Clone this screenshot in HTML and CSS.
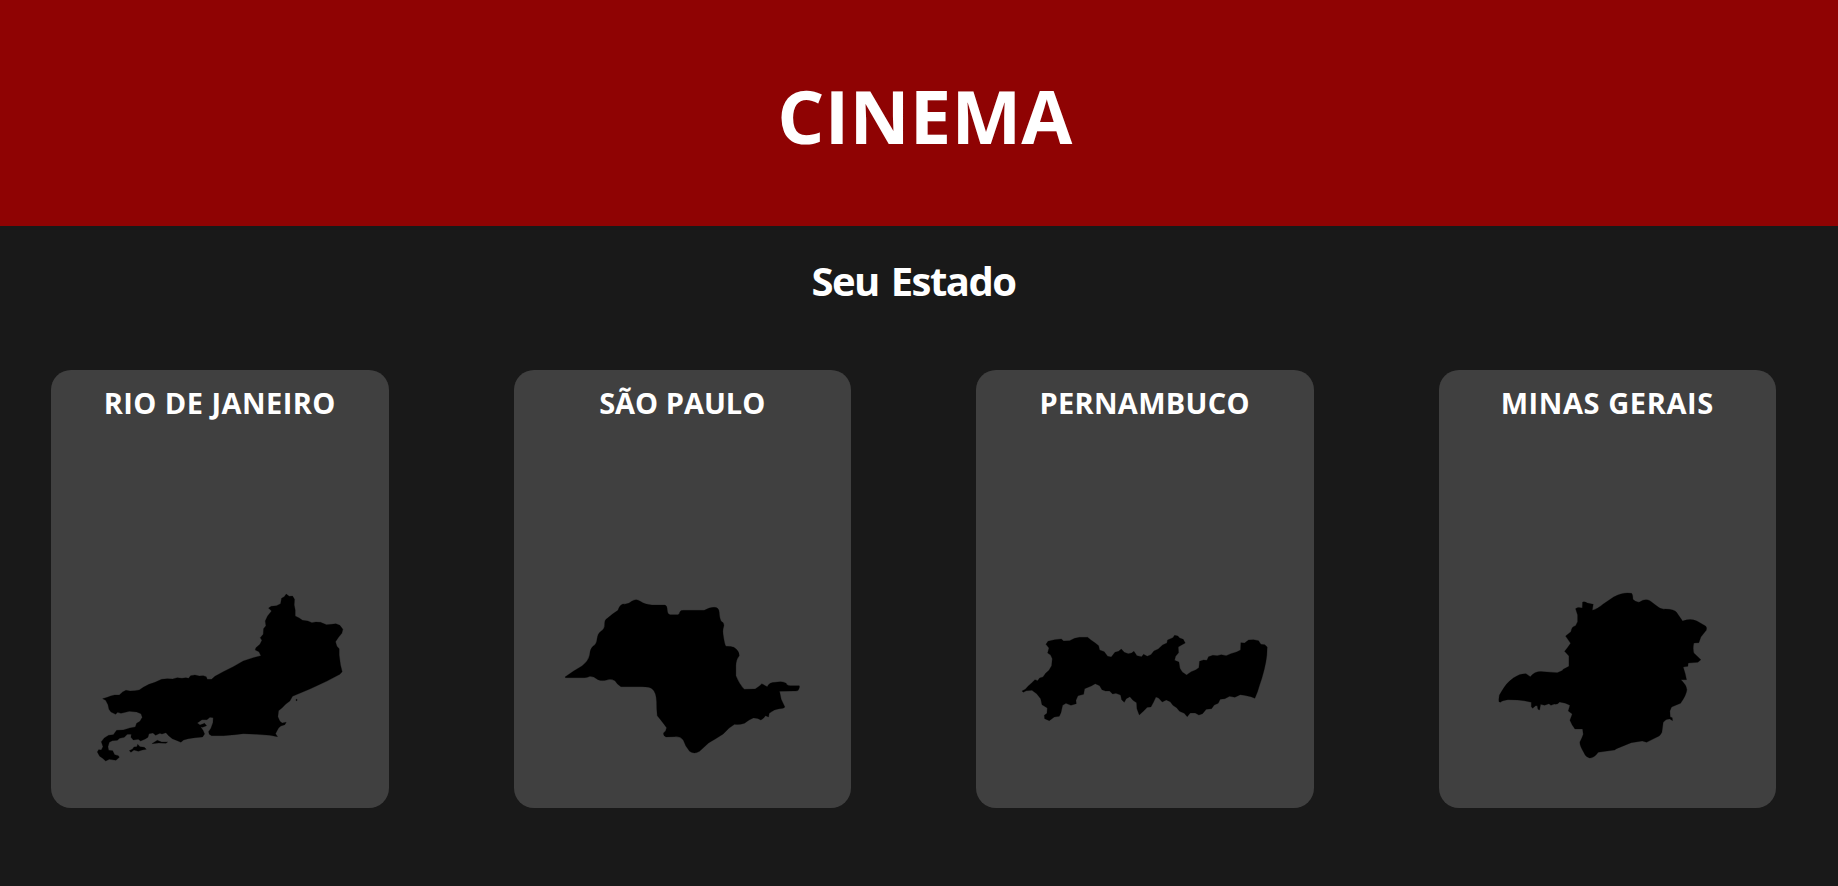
FILE: index.html
```html
<!DOCTYPE html>
<html lang="pt-BR">
<head>
<meta charset="utf-8">
<title>Cinema</title>
<link rel="stylesheet" href="styles.css">
</head>
<body>
<header class="banner"><h1 class="brand">CINEMA</h1></header>
<main class="content">
<h2 class="subtitle">Seu Estado</h2>
<div class="states">
<section class="card">
<h3 class="name rj">RIO DE JANEIRO</h3>
<svg class="map" viewBox="0 0 1013 570"><g transform="translate(87 0)">
<path d="M68 356L82 352L92 348L104 345L118 345L128 336L138 331L150 333L165 332L178 330L190 322L207 313L225 307L245 298L262 296L278 297L292 293L306 295L318 293L326 295L332 287L345 285L358 288L370 287L379 290L382 298L395 298L405 289L430 275L460 260L490 243L520 233L543 227L537 215L526 210L528 203L540 193L546 181L541 173L550 163L551 146L558 137L556 123L563 108L575 93L566 84L574 79L590 77L602 71L605 55L613 50L619 42L628 49L638 48L644 58L643 75L646 90L646 108L658 114L668 121L684 123L696 128L708 126L722 127L740 134L755 133L768 131L780 136L789 148L786 160L776 172L767 185L771 199L778 206L778 225L782 255L787 275L780 283L740 304L690 327L638 349L630 363L618 372L607 383L596 392L594 410L600 424L607 429L619 427L615 434L603 438L596 444L590 455L587 461L593 470L570 466L530 463L490 461L465 464L430 467L395 467L388 463L386 455L393 445L399 428L400 413L390 412L381 419L366 419L352 429L360 435L374 430L380 437L368 442L362 440L370 452L374 462L368 471L345 473L325 476L311 480L303 487L292 482L277 476L266 467L258 458L246 462L240 460L227 466L219 459L207 461L204 472L196 477L182 483L175 478L160 480L153 472L154 463L142 463L133 472L119 475L112 481L97 482L88 487L84 500L86 511L98 512L104 524L115 527L118 532L108 541L88 538L77 543L68 535L59 529L52 516L56 509L64 510L69 500L64 485L73 474L86 466L100 464L110 451L130 450L150 444L166 441L170 430L180 424L187 412L183 401L170 396L148 394L136 397L123 400L113 397L107 403L93 396L87 388L84 374L77 361Z"/>
<path d="M148 512L158 507L162 501L171 500L173 493L180 500L193 502L199 508L187 510L175 514L162 510L153 517Z"/>
<path d="M216 491L224 486L232 481L245 486L263 486L258 490L236 489Z"/>
<circle cx="650" cy="360" r="2"/>
</g></svg>
</section>
<section class="card">
<h3 class="name sp">SÃO PAULO</h3>
<svg class="map" viewBox="0 0 1013 570"><g transform="translate(109 0)">
<path d="M44 291Q70 272 95 258Q115 242 118 225Q119 207 128 199Q140 192 140 178Q142 160 152 154Q163 147 163 135Q162 119 171 115Q190 99 203 91Q208 74 218 72Q235 74 244 64Q258 54 270 64Q284 74 305 75L344 75Q351 77 351 90Q352 104 360 104L383 104Q388 102 389 95Q391 91 400 91L462 91Q480 81 492 82Q506 82 507 97Q508 116 513 124Q524 129 520 141Q516 151 520 172Q523 193 527 199Q540 198 551 202Q568 213 567 227Q557 239 557 257L557 287Q567 312 582 328L615 327Q628 319 635 311Q645 318 651 320Q657 307 675 307Q698 302 708 310Q709 317 720 317L747 317Q750 321 744 331Q741 334 730 333L688 334L693 358L704 381Q701 386 688 386Q673 387 657 400L655 411L646 407Q639 417 632 420Q621 413 609 414Q592 421 583 430Q568 435 553 433Q535 443 519 462Q496 477 475 489L448 514Q432 524 418 514Q405 499 399 480Q390 469 374 470L347 471Q338 467 340 459Q348 453 349 443Q332 420 321 407Q319 390 319 365Q318 337 306 327Q299 320 275 320L212 320Q201 314 194 302Q180 295 169 300Q155 304 143 299Q130 289 119 289Q110 294 100 293L46 293Z"/>
</g></svg>
</section>
<section class="card">
<h3 class="name pe">PERNAMBUCO</h3>
<svg class="map" viewBox="0 0 1013 570"><g transform="translate(101 120)">
<path d="M37 213L47 208L55 199L66 189L76 179L84 182L90 174L100 171L108 160L118 151L126 137L128 116L123 105L114 99L118 84L109 73L115 64L135 59L155 57L162 63L180 62L195 55L210 52L234 52L244 60L257 69L267 77L270 90L284 95L294 109L305 111L316 97L327 94L335 87L344 97L356 101L366 99L373 94L382 107L396 110L402 103L413 109L424 104L433 93L446 87L459 75L472 69L474 60L490 53L495 46L505 48L510 54L521 58L527 69L516 75L506 81L507 98L498 109L495 121L508 126L511 145L518 156L531 165L545 155L558 150L568 143L570 124L582 120L592 121L597 110L610 106L623 107L635 104L650 107L664 101L681 96L693 90L694 68L705 69L717 60L732 59L747 62L754 73L766 74L773 81L772 105L769 126L764 149L757 175L750 196L744 215L736 235L724 230L704 226L692 224L676 232L660 229L646 236L632 238L626 250L614 255L606 266L590 268L579 281L568 285L557 279L542 279L533 290L524 280L510 274L501 263L490 256L482 245L470 240L458 246L447 234L439 231L432 246L424 261L413 262L403 272L389 285L382 266L381 248L370 241L361 230L350 236L344 247L336 239L333 225L319 220L309 222L300 213L288 213L277 209L270 197L257 191L245 198L225 206L222 223L205 227L199 241L200 251L184 256L169 250L159 256L154 278L149 289L134 291L119 302L105 296L104 286L112 280L113 264L97 254L93 236L81 221L67 211L50 212L41 217Z"/>
</g></svg>
</section>
<section class="card">
<h3 class="name mg">MINAS GERAIS</h3>
<svg class="map" viewBox="0 0 1013 570"><g transform="translate(123 0)">
<path d="M57 365Q54 346 66 332Q79 309 100 294Q120 280 138 281L151 290Q165 272 190 275L232 278Q247 274 250 268L267 259L267 228L254 214L262 204L272 190L257 168L273 155Q275 139 287 137L293 125L293 105L287 86Q293 80 307 84L308 66Q315 64 322 69L340 73L337 91Q353 87 370 72L401 51Q430 35 455 40Q459 44 459 58Q468 68 479 66Q496 54 510 62L532 79Q542 89 556 87Q584 88 590 97Q603 116 608 123Q632 114 651 123L677 138Q682 142 679 151L663 171L657 188L642 189Q638 205 642 219L663 239L654 247L625 249L624 259L610 261L616 281L620 299L603 299Q621 316 621 329Q620 344 602 370L575 381L570 393L571 411L577 413L578 422L570 417Q558 416 550 427L546 457Q541 469 530 472L500 487L487 483L454 488L410 506L404 510L355 517Q342 535 329 534Q317 531 312 518Q298 495 300 486Q306 475 310 463L308 447L285 447Q275 434 270 421L277 402L265 393L270 376Q258 368 239 366Q232 375 223 372L213 376L207 371L194 376L182 373L179 390L174 388L172 377L167 377L158 385L154 380L154 367Q128 359 84 359Q66 361 61 367Z"/>
</g></svg>
</section>
</div>
</main>
</body>
</html>
```
FILE: styles.css
```css
* { box-sizing: border-box; margin: 0; }
body {
  min-height: 886px;
  background: #191919;
  color: #fff;
  font-family: "Open Sans", "Noto Sans", sans-serif;
  font-weight: 700;
}
.banner {
  height: 226px;
  padding: 65px 0 0 12px;
  background: #8f0303;
  text-align: center;
}
.brand { font-size: 74px; line-height: 101px; letter-spacing: 0.2px; }
.subtitle {
  font-size: 40px;
  line-height: 54px;
  letter-spacing: -1.5px;
  word-spacing: 3px;
  text-align: center;
}
.content { padding: 28px 62px 0 51px; }
.states {
  display: grid;
  grid-template-columns: repeat(4, 1fr);
  gap: 125px;
  margin-top: 62px;
}
.card {
  display: flex;
  flex-direction: column;
  height: 438px;
  padding-top: 13px;
  border-radius: 20px;
  background: #404040;
  text-align: center;
}
.name { font-size: 29px; line-height: 40px; white-space: nowrap; }
.rj { letter-spacing: 0.45px; }
.pe { letter-spacing: 0.3px; }
.mg { letter-spacing: 0.6px; }
.map {
  display: block;
  width: 100%;
  height: 190px;
  margin-top: 157px;
  stroke: #000;
  stroke-opacity: 0.4;
  stroke-width: 2;
}
```
